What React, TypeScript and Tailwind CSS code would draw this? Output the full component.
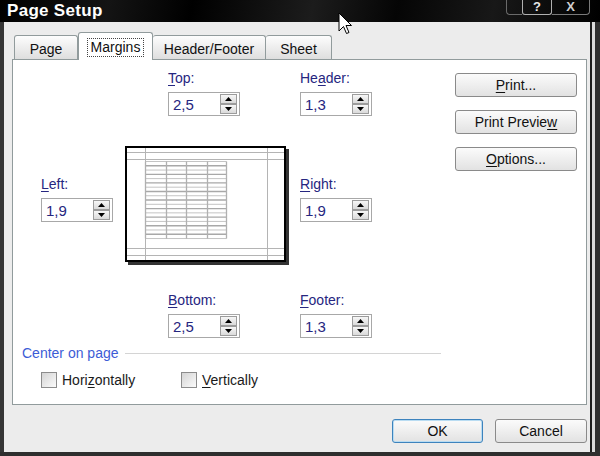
import React from "react";

const navy = "text-[#262680]";

function U({ children }: { children: React.ReactNode }) {
  return <span className="underline decoration-1 underline-offset-2">{children}</span>;
}

function Arrow({ up }: { up?: boolean }) {
  return (
    <div className="flex h-[10px] w-[17px] items-center justify-center border border-[#9c9c9c] bg-[linear-gradient(#f7f7f7,#dadada)]">
      <svg width="7" height="4" viewBox="0 0 7 4">
        {up ? <path d="M3.5 0 L7 4 L0 4 Z" fill="#000" /> : <path d="M0 0 L7 0 L3.5 4 Z" fill="#000" />}
      </svg>
    </div>
  );
}

function SpinField({ label, value, className }: { label: React.ReactNode; value: string; className?: string }) {
  return (
    <div className={"flex w-[72px] flex-col " + (className ?? "")}>
      <div className={"h-4 text-[14px] leading-4 " + navy}>{label}</div>
      <div className="mt-[6px] flex h-6 items-center border border-[#a8a8a8] bg-white pl-[4px] pr-[2px]">
        <span className={"flex-1 text-[15px] leading-none " + navy}>{value}</span>
        <div className="flex flex-col">
          <Arrow up />
          <Arrow />
        </div>
      </div>
    </div>
  );
}

function SideButton({ children }: { children: React.ReactNode }) {
  return (
    <div className="flex h-6 w-[122px] items-center justify-center rounded-[3px] border border-[#8a8a8a] bg-[linear-gradient(#fbfbfb,#e2e2e2)] text-[14px] text-[#111]">
      {children}
    </div>
  );
}

function Check({ children, className }: { children: React.ReactNode; className?: string }) {
  return (
    <div className={"flex items-center gap-[5px] " + (className ?? "")}>
      <div className="h-4 w-4 border border-[#8c8c8c] bg-[linear-gradient(135deg,#d4d4d4,#fbfbfb)]" />
      <span className="text-[14px] leading-4 text-[#1a1a1a]">{children}</span>
    </div>
  );
}

function PagePreview() {
  const rows: number[] = [];
  for (let i = 0; i <= 18; i++) rows.push(15.5 + i * 4.28);
  const line = "#b4b4b4";
  return (
    <svg width="164" height="119" viewBox="0 0 164 119" className="shrink-0">
      <rect x="3" y="3" width="161" height="116" fill="#333" />
      <rect x="1" y="1" width="159" height="114" fill="#fff" stroke="#000" strokeWidth="2" />
      <line x1="2" y1="6.5" x2="159" y2="6.5" stroke={line} />
      <line x1="2" y1="13.5" x2="159" y2="13.5" stroke={line} />
      <line x1="2" y1="102.5" x2="159" y2="102.5" stroke={line} />
      <line x1="2" y1="109.5" x2="159" y2="109.5" stroke={line} />
      <line x1="20.5" y1="2" x2="20.5" y2="114" stroke={line} />
      <line x1="142.5" y1="2" x2="142.5" y2="114" stroke={line} />
      {rows.map((y, i) => (
        <line key={i} x1="20.5" y1={y} x2="101.5" y2={y} stroke={i % 2 ? "#a8a8a8" : "#c4c4c4"} strokeWidth={i % 2 ? 1.4 : 1} />
      ))}
      {[20.5, 41.5, 61.5, 82.5, 101.5].map((x) => (
        <line key={x} x1={x} y1="15.5" x2={x} y2={rows[rows.length - 1]} stroke="#b0b0b0" strokeWidth="1.3" />
      ))}
    </svg>
  );
}

export default function App() {
  return (
    <div className="relative flex h-[456px] w-[600px] flex-col overflow-hidden bg-black font-['Liberation_Sans',Arial,sans-serif]">
      {/* title bar */}
      <div className="flex h-[22px] shrink-0 items-start bg-[linear-gradient(100deg,#000_0%,#141414_18%,#000_32%,#1c1c1c_52%,#050505_66%,#181818_82%,#000_100%)]">
        <span className="pl-[7px] text-[17px] font-bold leading-[22px] tracking-[0.3px] text-white">Page Setup</span>
        <div className="ml-auto mr-[10px] flex h-[15px]">
          <div className="w-[16px] rounded-bl-[4px] border-b border-l border-[#6a6a6a]" />
          <div className="flex w-[30px] items-end justify-center rounded-b-[3px] border-x border-b border-[#b0b0b0] pb-[1px] text-[13px] font-bold leading-none text-[#e8e8e8]">
            ?
          </div>
          <div className="flex w-[38px] items-end justify-center rounded-br-[4px] border-b border-r border-[#7a7a7a] pb-[1px] text-[13px] font-bold leading-none text-[#cfcfcf]">
            X
          </div>
        </div>
      </div>

      <div className="flex flex-1">
        {/* body */}
        <div className="flex flex-1 flex-col border-l-4 border-[#353535] bg-[#ececec] pl-[8px] pr-[3px]">
          {/* tabs */}
          <div className="flex h-[37px] items-end pl-[2px] pt-[10px] text-[14px] text-[#111]">
            <div className="flex h-[24px] w-[64px] items-center justify-center rounded-t-[3px] border-x border-t border-[#919b9c] bg-[linear-gradient(#fdfdfd,#dedede)] pt-[3px]">
              Page
            </div>
            <div className="relative z-10 -mb-px flex h-[28px] w-[75px] items-center justify-center rounded-t-[3px] border-x border-t border-[#919b9c] bg-white pt-[2px]">
              <span className="border border-dotted border-[#444] px-[3px] leading-[17px]">Margins</span>
            </div>
            <div className="flex h-[24px] w-[113px] items-center justify-center rounded-t-[3px] border-r border-t border-[#919b9c] bg-[linear-gradient(#fdfdfd,#dedede)] pt-[3px]">
              Header/Footer
            </div>
            <div className="flex h-[24px] w-[66px] items-center justify-center rounded-t-[3px] border-r border-t border-[#919b9c] bg-[linear-gradient(#fdfdfd,#dedede)] pt-[3px]">
              Sheet
            </div>
          </div>

          {/* panel */}
          <div className="flex h-[346px] border border-[#919b9c] bg-white">
            <div className="flex w-[442px] flex-col">
              <div className="mt-[10px] flex gap-[60px] pl-[155px]">
                <SpinField label={<><U>T</U>op:</>} value="2,5" />
                <SpinField label={<>He<U>a</U>der:</>} value="1,3" />
              </div>
              <div className="mt-[30px] flex items-start pl-[28px]">
                <SpinField className="mt-[30px]" label={<><U>L</U>eft:</>} value="1,9" />
                <div className="ml-[12px]">
                  <PagePreview />
                </div>
                <SpinField className="ml-[11px] mt-[30px]" label={<><U>R</U>ight:</>} value="1,9" />
              </div>
              <div className="mt-[27px] flex gap-[60px] pl-[155px]">
                <SpinField label={<><U>B</U>ottom:</>} value="2,5" />
                <SpinField label={<><U>F</U>ooter:</>} value="1,3" />
              </div>
              <div className="ml-[9px] mt-[7px] flex w-[419px] items-center gap-[6px]">
                <span className="text-[14px] leading-4 text-[#3c5cd6]">Center on page</span>
                <div className="h-px flex-1 bg-[#d4d4d4]" />
              </div>
              <div className="mt-[11px] flex pl-[28px]">
                <Check className="w-[140px]">
                  Hori<U>z</U>ontally
                </Check>
                <Check>
                  <U>V</U>ertically
                </Check>
              </div>
            </div>
            <div className="flex flex-col gap-[13px] pt-[13px]">
              <SideButton>
                <U>P</U>rint...
              </SideButton>
              <SideButton>
                Print Previe<U>w</U>
              </SideButton>
              <SideButton>
                <U>O</U>ptions...
              </SideButton>
            </div>
          </div>

          {/* bottom buttons */}
          <div className="mt-[14px] flex justify-end gap-[12px] text-[14px] text-[#111]">
            <div className="flex h-6 w-[91px] items-center justify-center rounded-[3px] border border-[#3d83bd] bg-[linear-gradient(#fbfbfb,#e2e2e2)] shadow-[inset_0_0_0_1px_#b9dcf2]">
              OK
            </div>
            <div className="flex h-6 w-[92px] items-center justify-center rounded-[3px] border border-[#8a8a8a] bg-[linear-gradient(#fbfbfb,#e2e2e2)]">
              Cancel
            </div>
          </div>
        </div>

        {/* right frame */}
        <div className="flex w-[10px]">
          <div className="w-[2px] bg-[#1c1c1c]" />
          <div className="w-[3px] bg-[#d9d9d9]" />
          <div className="flex-1 bg-[#2e2e2e]" />
        </div>
      </div>
      <div className="h-[4px] shrink-0 bg-[#2e2e2e]" />

      {/* mouse pointer */}
      <svg className="absolute left-[338px] top-[12px]" width="16" height="24" viewBox="0 0 16 24">
        <path d="M1 1 L1 19 L5.5 14.5 L8.5 21.5 L11 20.5 L8 13.5 L13.5 13.5 Z" fill="#fff" stroke="#000" strokeWidth="1" strokeLinejoin="round" />
      </svg>
    </div>
  );
}
